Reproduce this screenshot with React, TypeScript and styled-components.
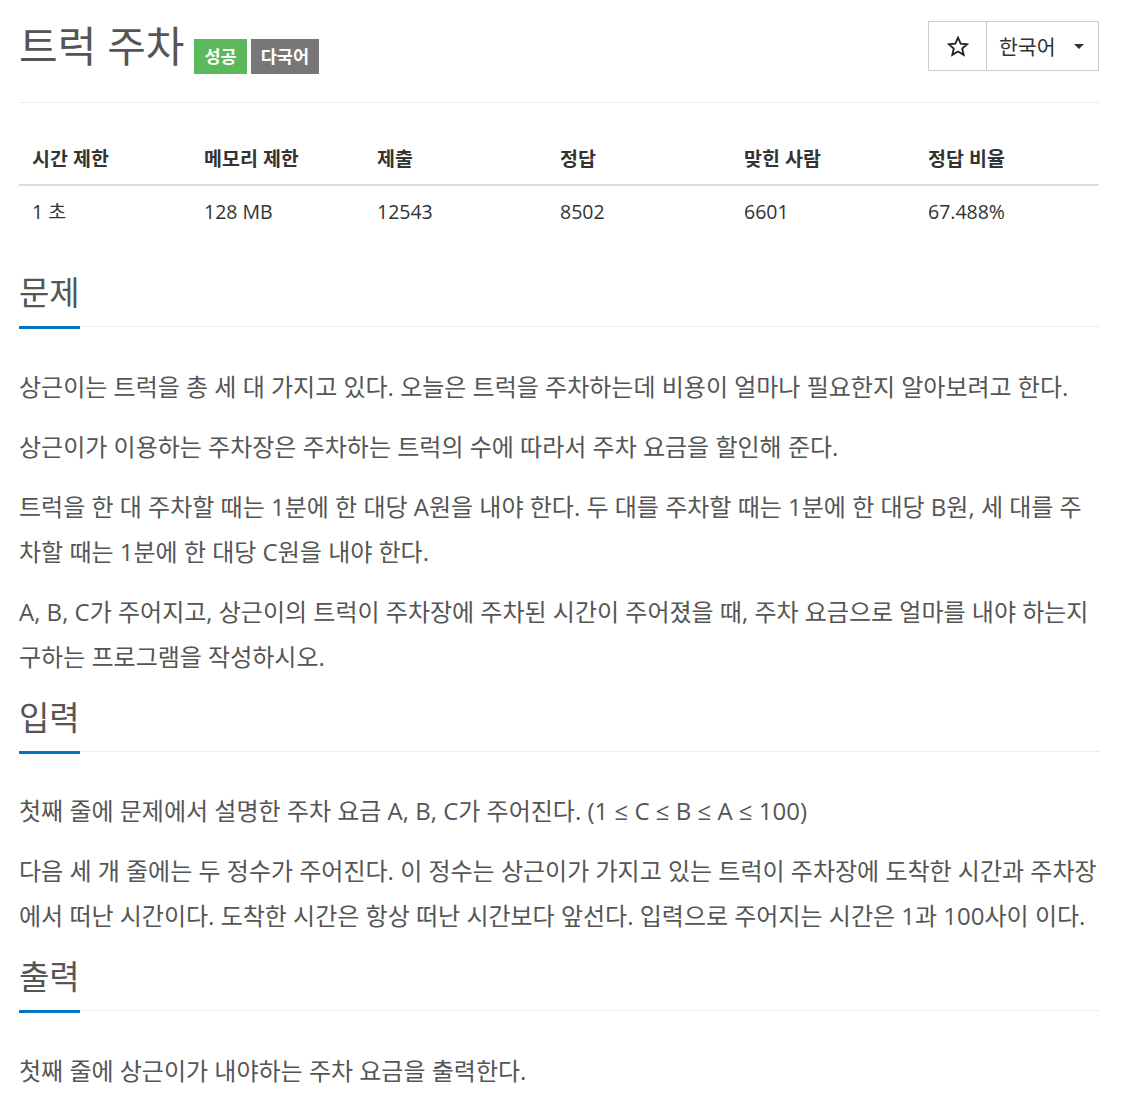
import React from 'react';
import styled, { createGlobalStyle } from 'styled-components';

const GlobalStyle = createGlobalStyle`
  html, body {
    margin: 0;
    padding: 0;
    background: #fff;
  }
  body {
    font-family: "Open Sans", "Noto Sans CJK KR", sans-serif;
    color: #555;
  }
`;

const Page = styled.div`
  width: 1080px;
  margin-left: 19px;
  padding-bottom: 20px;
`;

const Header = styled.div`
  display: flex;
  justify-content: space-between;
  align-items: flex-start;
  padding: 21px 0 29px;
  border-bottom: 1px solid #eee;
`;

const Title = styled.h1`
  margin: 0;
  font-size: 42px;
  font-weight: 400;
  line-height: 50px;
  color: #555;
  display: flex;
  align-items: baseline;
`;

const TitleText = styled.span`
  margin-right: 10px;
`;

const Label = styled.span<{ tone: 'success' | 'default' }>`
  display: inline-flex;
  align-items: center;
  height: 35px;
  padding: 0 10px;
  margin-right: 4px;
  font-size: 17.5px;
  font-weight: 700;
  line-height: 35px;
  color: #fff;
  background: ${p => (p.tone === 'success' ? '#5cb85c' : '#777')};
  position: relative;
  top: 1px;
`;

const ButtonGroup = styled.div`
  display: flex;
  height: 50px;
  border: 1px solid #ccc;
  box-sizing: border-box;
`;

const StarButton = styled.div`
  width: 57px;
  display: flex;
  align-items: center;
  justify-content: center;
  border-right: 1px solid #ccc;
  color: #222;
`;

const LangButton = styled.div`
  width: 111px;
  display: flex;
  align-items: center;
  box-sizing: border-box;
  padding: 0 14px 0 12px;
  font-size: 20.5px;
  color: #333;
`;

const Caret = styled.span`
  margin-left: auto;
  width: 0;
  height: 0;
  border-top: 5px solid #333;
  border-left: 5px solid transparent;
  border-right: 5px solid transparent;
`;

const Table = styled.div`
  margin-top: 29px;
  display: grid;
  grid-template-columns: 172px 173px 183px 184px 184px 184px;
  font-size: 19.5px;
  color: #333;
`;

const HeadCell = styled.div`
  padding: 14px 13px 12px;
  line-height: 26px;
  font-weight: 700;
  border-bottom: 2px solid #ddd;
`;

const Cell = styled.div`
  padding: 13px 13px 14px;
  line-height: 26px;
`;

const Section = styled.section<{ first?: boolean }>`
  margin-top: ${p => (p.first ? '37px' : '22px')};
`;

const Headline = styled.div`
  border-bottom: 1px dotted #ddd;
  height: 50px;
`;

const HeadlineTitle = styled.h2`
  display: inline-block;
  margin: 0;
  font-size: 33px;
  font-weight: 400;
  line-height: 33px;
  padding-bottom: 17px;
  border-bottom: 3px solid #0076c0;
  color: #555;
`;

const Body = styled.div`
  padding-top: 36.5px;
`;

const Para = styled.p`
  margin: 0 0 15px;
  font-size: 24px;
  line-height: 45px;
  color: #555;
`;

const StarIcon = () => (
  <svg width="22" height="21" viewBox="0 0 24 23">
    <path
      d="M12 1.8l2.9 6.6 7.1.6-5.4 4.7 1.6 7-6.2-3.7-6.2 3.7 1.6-7L2 9l7.1-.6z"
      fill="none"
      stroke="currentColor"
      strokeWidth="2"
      strokeLinejoin="miter"
    />
  </svg>
);

const limits = [
  ['시간 제한', '1 초'],
  ['메모리 제한', '128 MB'],
  ['제출', '12543'],
  ['정답', '8502'],
  ['맞힌 사람', '6601'],
  ['정답 비율', '67.488%'],
];

const sections: { title: string; paras: string[] }[] = [
  {
    title: '문제',
    paras: [
      '상근이는 트럭을 총 세 대 가지고 있다. 오늘은 트럭을 주차하는데 비용이 얼마나 필요한지 알아보려고 한다.',
      '상근이가 이용하는 주차장은 주차하는 트럭의 수에 따라서 주차 요금을 할인해 준다.',
      '트럭을 한 대 주차할 때는 1분에 한 대당 A원을 내야 한다. 두 대를 주차할 때는 1분에 한 대당 B원, 세 대를 주차할 때는 1분에 한 대당 C원을 내야 한다.',
      'A, B, C가 주어지고, 상근이의 트럭이 주차장에 주차된 시간이 주어졌을 때, 주차 요금으로 얼마를 내야 하는지 구하는 프로그램을 작성하시오.',
    ],
  },
  {
    title: '입력',
    paras: [
      '첫째 줄에 문제에서 설명한 주차 요금 A, B, C가 주어진다. (1 ≤ C ≤ B ≤ A ≤ 100)',
      '다음 세 개 줄에는 두 정수가 주어진다. 이 정수는 상근이가 가지고 있는 트럭이 주차장에 도착한 시간과 주차장에서 떠난 시간이다. 도착한 시간은 항상 떠난 시간보다 앞선다. 입력으로 주어지는 시간은 1과 100사이 이다.',
    ],
  },
  {
    title: '출력',
    paras: ['첫째 줄에 상근이가 내야하는 주차 요금을 출력한다.'],
  },
];

export default function App() {
  return (
    <Page>
      <GlobalStyle />
      <Header>
        <Title>
          <TitleText>트럭 주차</TitleText>
          <Label tone="success">성공</Label>
          <Label tone="default">다국어</Label>
        </Title>
        <ButtonGroup>
          <StarButton>
            <StarIcon />
          </StarButton>
          <LangButton>
            한국어
            <Caret />
          </LangButton>
        </ButtonGroup>
      </Header>
      <Table>
        {limits.map(([h]) => <HeadCell key={h}>{h}</HeadCell>)}
        {limits.map(([h, v]) => <Cell key={h}>{v}</Cell>)}
      </Table>
      {sections.map((s, i) => (
        <Section key={s.title} first={i === 0}>
          <Headline>
            <HeadlineTitle>{s.title}</HeadlineTitle>
          </Headline>
          <Body>
            {s.paras.map(p => <Para key={p}>{p}</Para>)}
          </Body>
        </Section>
      ))}
    </Page>
  );
}
